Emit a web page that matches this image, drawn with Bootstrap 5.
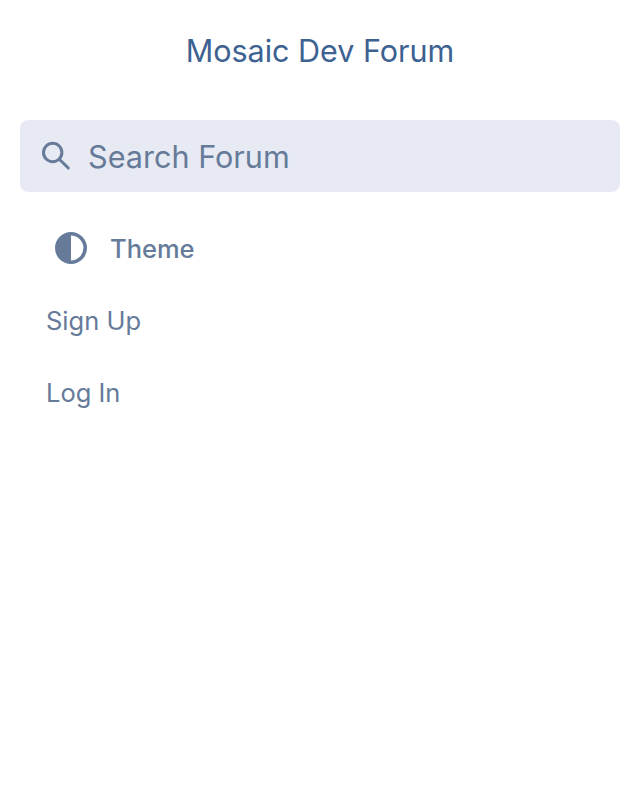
<!DOCTYPE html>
<html lang="en">
<head>
    <meta charset="UTF-8">
    <title>Mosaic Dev Forum</title>
    <link href="https://cdn.jsdelivr.net/npm/bootstrap@5.3.0/dist/css/bootstrap.min.css" rel="stylesheet">
    <style>
        body {
            font-family: Inter, "Liberation Sans", sans-serif;
            background: #fff;
        }
        .forum-title {
            height: 102px;
            font-size: 30.5px;
            font-weight: 400;
            color: #3d6291;
        }
        .forum-menu {
            padding: 18px 20px 0;
        }
        .forum-search {
            height: 72px;
            margin-bottom: 21px;
            background: #e7eaf2;
            border-radius: 8px;
            padding-left: 21px;
            color: #667b99;
            font-size: 30.6px;
        }
        .forum-search svg {
            margin-right: 17px;
        }
        .forum-search span {
            padding-top: 2px;
        }
        .forum-theme {
            height: 72px;
            padding-left: 35px;
            color: #667b99;
            font-size: 25.5px;
            font-weight: 500;
        }
        .forum-theme svg {
            margin-right: 23px;
            margin-bottom: 2px;
        }
        .forum-link {
            display: flex;
            align-items: center;
            height: 72px;
            padding-left: 26px;
            color: #667b99;
            font-size: 25.5px;
            text-decoration: none;
        }
    </style>
</head>
<body>
<div class="d-flex justify-content-center align-items-center forum-title">Mosaic Dev Forum</div>
<div class="forum-menu">
    <div class="d-flex align-items-center forum-search">
        <svg width="30" height="30" viewBox="0 0 30 30" fill="none" stroke="#667b99" stroke-width="3" stroke-linecap="round">
            <circle cx="11.7" cy="11.5" r="9.2"/>
            <path d="M18.5 18.5L27.3 27"/>
        </svg>
        <span>Search Forum</span>
    </div>
    <div class="d-flex align-items-center forum-theme">
        <svg width="32" height="32" viewBox="0 0 32 32">
            <circle cx="16" cy="16" r="14.2" fill="none" stroke="#667b99" stroke-width="3.6"/>
            <path d="M16 2A14 14 0 0 0 16 30Z" fill="#667b99"/>
        </svg>
        <span>Theme</span>
    </div>
    <a class="forum-link" href="#">Sign Up</a>
    <a class="forum-link" href="#">Log In</a>
</div>
<script src="https://cdn.jsdelivr.net/npm/bootstrap@5.3.0/dist/js/bootstrap.bundle.min.js"></script>
</body>
</html>
